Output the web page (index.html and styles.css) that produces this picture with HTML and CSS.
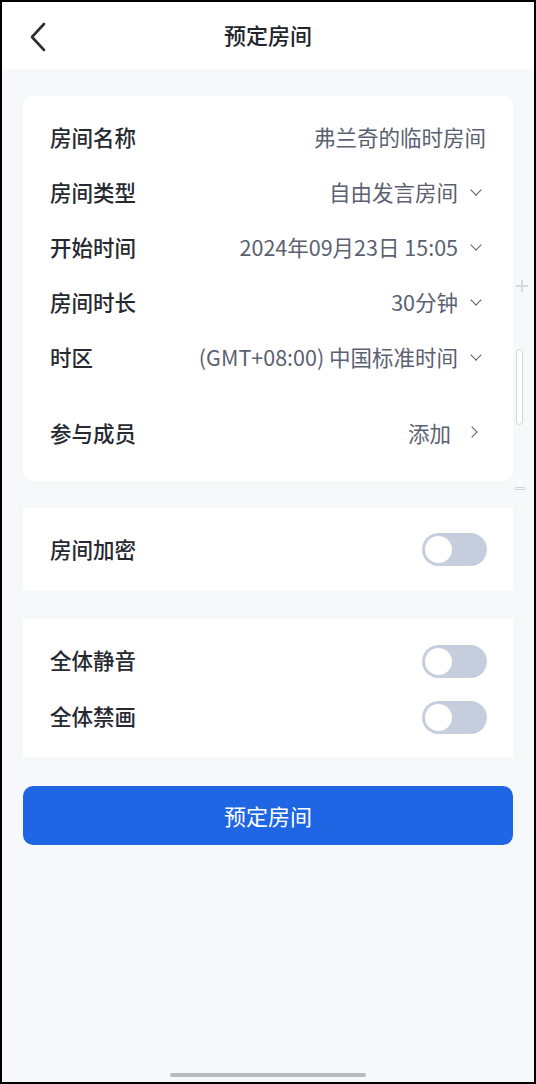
FILE: index.html
```html
<!DOCTYPE html>
<html lang="zh-CN">
<head>
    <meta charset="UTF-8">
    <meta name="viewport" content="width=device-width, initial-scale=1.0">
    <title>预定房间</title>
    <link rel="stylesheet" href="styles.css">
</head>
<body>
    <div class="phone">
        <header class="nav-bar">
            <button class="back-btn" aria-label="返回">
                <svg width="20" height="30" viewBox="0 0 20 30">
                    <path d="M16 2 L4 15 L16 28" fill="none" stroke="#2b2e35" stroke-width="2.6" stroke-linecap="round" stroke-linejoin="round"/>
                </svg>
            </button>
            <h1 class="nav-title">预定房间</h1>
        </header>

        <main class="content">
            <section class="card card-round">
                <div class="form-row">
                    <span class="label">房间名称</span>
                    <span class="value">弗兰奇的临时房间</span>
                </div>
                <div class="form-row">
                    <span class="label">房间类型</span>
                    <span class="value">自由发言房间<i class="arrow-down"></i></span>
                </div>
                <div class="form-row">
                    <span class="label">开始时间</span>
                    <span class="value">2024年09月23日 15:05<i class="arrow-down"></i></span>
                </div>
                <div class="form-row">
                    <span class="label">房间时长</span>
                    <span class="value">30分钟<i class="arrow-down"></i></span>
                </div>
                <div class="form-row">
                    <span class="label">时区</span>
                    <span class="value">(GMT+08:00) 中国标准时间<i class="arrow-down"></i></span>
                </div>
                <div class="form-row members-row">
                    <span class="label">参与成员</span>
                    <span class="value">添加<i class="arrow-right"></i></span>
                </div>
            </section>

            <section class="card single">
                <div class="form-row">
                    <span class="label">房间加密</span>
                    <span class="switch"></span>
                </div>
            </section>

            <section class="card double">
                <div class="form-row switch-row">
                    <span class="label">全体静音</span>
                    <span class="switch"></span>
                </div>
                <div class="form-row switch-row">
                    <span class="label">全体禁画</span>
                    <span class="switch"></span>
                </div>
            </section>

            <button class="submit-btn">预定房间</button>
        </main>

        <!-- overlay scroll indicator -->
        <div class="scroll-plus"></div>
        <div class="scroll-thumb"></div>
        <div class="scroll-minus"></div>

        <div class="home-indicator"></div>
    </div>
</body>
</html>
```

FILE: styles.css
```css
* {
    box-sizing: border-box;
}
body {
    margin: 0;
    padding: 0;
    font-family: "Noto Sans CJK SC", "Noto Sans", sans-serif;
    background: #fff;
}
.phone {
    position: relative;
    width: 536px;
    height: 1084px;
    border: 2px solid #000;
    background-color: #f7f8fa;
    display: flex;
    flex-direction: column;
    overflow: hidden;
}
.nav-bar {
    position: relative;
    height: 67px;
    background: #fff;
    display: flex;
    align-items: center;
    justify-content: center;
}
.back-btn {
    position: absolute;
    left: 26px;
    top: 20px;
    padding: 0;
    border: none;
    background: none;
    line-height: 0;
}
.nav-title {
    margin: -4px 0 0 0;
    font-size: 22px;
    font-weight: 500;
    color: #22252b;
}
.content {
    padding: 27px 21px 0 21px;
    display: flex;
    flex-direction: column;
    gap: 27px;
}
.card {
    background: #fff;
    padding: 0 27px;
}
.card-round {
    border-radius: 10px;
    padding-top: 14px;
    padding-bottom: 20px;
}
.form-row {
    height: 55px;
    display: flex;
    align-items: center;
    justify-content: space-between;
}
.members-row {
    margin-top: 21px;
}
.label {
    font-size: 21.5px;
    font-weight: 500;
    color: #262930;
    margin-top: -3px;
}
.value {
    font-size: 21.5px;
    color: #5b6170;
    display: flex;
    align-items: center;
    margin-top: -3px;
}
.arrow-down {
    display: inline-block;
    width: 8px;
    height: 8px;
    border-right: 1.7px solid #5b6170;
    border-bottom: 1.7px solid #5b6170;
    transform: rotate(45deg);
    margin: -3px 6px 0 14px;
}
.arrow-right {
    display: inline-block;
    width: 8px;
    height: 8px;
    border-right: 1.8px solid #5b6170;
    border-bottom: 1.8px solid #5b6170;
    transform: rotate(-45deg);
    margin: 0 10px 0 17px;
}
.single {
    height: 83px;
    display: flex;
    flex-direction: column;
    justify-content: center;
}
.double {
    padding-top: 15px;
    padding-bottom: 13px;
}
.switch-row {
    height: 56px;
}
.switch {
    position: relative;
    width: 65px;
    height: 33px;
    border-radius: 17px;
    background: #c6cedd;
    margin-right: -1px;
}
.switch::after {
    content: "";
    position: absolute;
    left: 3px;
    top: 3px;
    width: 27px;
    height: 27px;
    border-radius: 50%;
    background: #fff;
}
.submit-btn {
    height: 59px;
    margin-top: 1px;
    border: none;
    border-radius: 10px;
    background-color: #1f66e5;
    color: #fff;
    font-family: inherit;
    font-size: 22px;
    font-weight: 400;
    padding-bottom: 3px;
}
.scroll-plus {
    position: absolute;
    left: 514px;
    top: 278px;
    width: 12px;
    height: 12px;
}
.scroll-plus::before,
.scroll-plus::after {
    content: "";
    position: absolute;
    background: #d6d8dc;
}
.scroll-plus::before {
    left: 0;
    top: 5px;
    width: 12px;
    height: 2px;
}
.scroll-plus::after {
    left: 5px;
    top: 0;
    width: 2px;
    height: 12px;
}
.scroll-thumb {
    position: absolute;
    left: 514px;
    top: 347px;
    width: 7px;
    height: 76px;
    border: 1px solid #d3d5d9;
    border-radius: 4px;
    background: #fff;
}
.scroll-minus {
    position: absolute;
    left: 512px;
    top: 485px;
    width: 12px;
    height: 3px;
    border: 1px solid #d3d5d9;
    border-radius: 2px;
}
.home-indicator {
    position: absolute;
    left: 168px;
    bottom: 5px;
    width: 196px;
    height: 4px;
    border-radius: 2px;
    background: #b9babd;
}
```
